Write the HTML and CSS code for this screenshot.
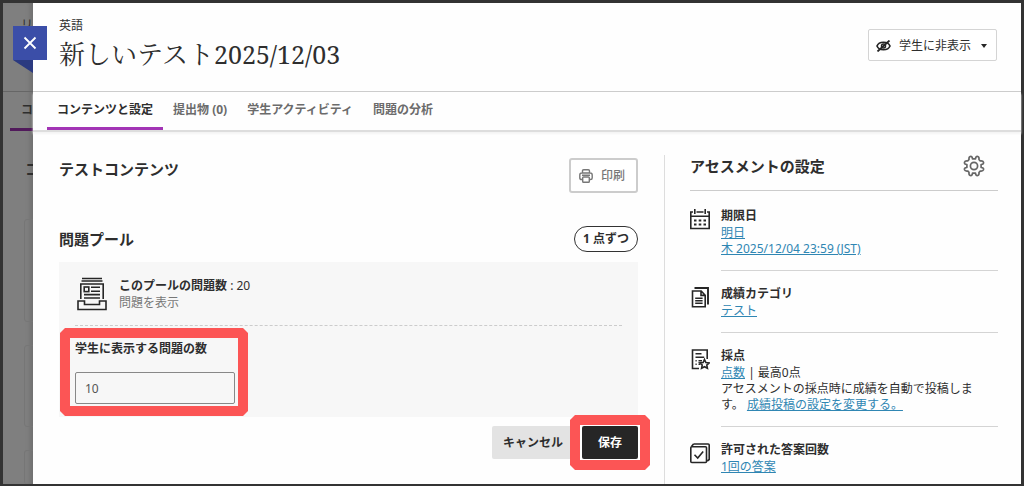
FILE: index.html
```html
<!DOCTYPE html>
<html lang="ja">
<head>
    <meta charset="UTF-8">
    <meta name="viewport" content="width=device-width, initial-scale=1.0">
    <title>新しいテスト2025/12/03</title>
    <link rel="stylesheet" href="styles.css">
</head>
<body>

    <div class="frame">
        <!-- dimmed page behind the panel -->
        <div class="behind" aria-hidden="true">
            <div class="behind-header">リ</div>
            <div class="behind-tabs"><span>コ</span></div>
            <div class="behind-title">コ</div>
            <div class="behind-card tall"></div>
            <div class="behind-card"></div>
            <div class="behind-card"></div>
        </div>

        <div class="panel">
            <button class="close" aria-label="閉じる">
                <svg width="14" height="14" viewBox="0 0 14 14"><path d="M1.500 1.500l11 11M12.500 1.500l-11 11" fill="none" stroke="#fff" stroke-width="1.800"/></svg>
            </button>

            <header class="header">
                <div>
                    <div class="course">英語</div>
                    <h1>新しいテスト<span class="date">2025/12/03</span></h1>
                </div>
                <button class="visibility">
                    <svg width="15" height="12" viewBox="0 0 15 12" fill="none" stroke="#262626"><path d="M1 6c2-5 11-5 13 0c-2 5-11 5-13 0z" stroke-width="1.700"/><circle cx="7.500" cy="6" r="2" stroke-width="1.500"/><path d="M1.500 11.500L13.500 .5" stroke-width="1.800"/></svg>
                    学生に非表示
                    <svg class="caret" width="6" height="4" viewBox="0 0 6 4"><path d="M0 0h6L3 4z" fill="#262626"/></svg>
                </button>
            </header>

            <nav class="tabs">
                <a href="#" class="active">コンテンツと設定</a>
                <a href="#">提出物 (0)</a>
                <a href="#">学生アクティビティ</a>
                <a href="#">問題の分析</a>
            </nav>

            <div class="content">
                <main>
                    <div class="row title-row">
                        <h2>テストコンテンツ</h2>
                        <button class="print">
                            <svg width="14" height="14" viewBox="0 0 14 14" fill="none" stroke="#777" stroke-width="1.400"><path d="M3.500 3.500V2q0-1.200 1.200-1.200h4.600q1.200 0 1.200 1.200v1.500M3.500 10.500H2.500Q.8 10.500.8 9V6q0-2 2-2h8.400q2 0 2 2v3q0 1.500-1.700 1.500h-1M3 6.200h8"/><rect x="3.700" y="8" width="6.600" height="5.200" rx=".8"/></svg>
                            印刷
                        </button>
                    </div>

                    <div class="row pool-row">
                        <h2>問題プール</h2>
                        <span class="badge">1 点ずつ</span>
                    </div>

                    <div class="pool">
                        <div class="pool-head">
                            <svg width="30" height="34" viewBox="0 0 30 34" fill="none" stroke="#262626" stroke-width="1.600"><path d="M5 1.500h20M4.500 4h21M3.800 22V7h22.400v15"/><rect x="7.200" y="10" width="4.600" height="4.600"/><path d="M14 10.200h9M14 14.200h9M7 17.600h16M7 21h16M1 24h6.500v3.500h15V24H29v8.500H1z"/></svg>
                            <div>
                                <div class="pool-count"><strong>このプールの問題数</strong> : 20</div>
                                <div class="pool-show">問題を表示</div>
                            </div>
                        </div>
                        <div class="field marked">
                            <label for="count">学生に表示する問題の数</label>
                            <input type="text" id="count" value="10">
                        </div>
                    </div>

                    <div class="actions">
                        <button class="cancel">キャンセル</button>
                        <div class="marked save-mark"><button class="save">保存</button></div>
                    </div>
                </main>

                <aside>
                    <div class="row side-head">
                        <h2>アセスメントの設定</h2>
                        <button class="gear" aria-label="設定">
                            <svg width="22" height="22" viewBox="0 0 22 22" fill="none" stroke="#666" stroke-width="1.700" stroke-linejoin="round"><path d="M9.500 3.900Q9.300 1 7.200 1.500Q5.700 2 6 4.600Q5.300 5.600 4.600 6Q2 5.700 1.500 7.200Q1 9.300 3.900 9.500V12.500Q1 12.700 1.500 14.800Q2 16.300 4.600 16Q5.600 16.700 6 17.400Q5.700 20 7.200 20.500Q9.300 21 9.500 18.100H12.500Q12.700 21 14.800 20.500Q16.300 20 16 17.400Q16.700 16.400 17.400 16Q20 16.300 20.500 14.800Q21 12.700 18.100 12.500V9.500Q21 9.300 20.500 7.200Q20 5.700 17.400 6Q16.400 5.300 16 4.600Q16.300 2 14.800 1.500Q12.700 1 12.500 3.900Z"/><circle cx="11" cy="11" r="3.600"/></svg>
                        </button>
                    </div>

                    <ul class="settings">
                        <li>
                            <svg width="20" height="21" viewBox="0 0 20 21" fill="none" stroke="#262626" stroke-width="1.600"><path d="M3 3H.8v16.500h18.400V3H17M6.500 3h7M.8 7.200h18.400M4.800 0v5M15.200 0v5"/><path d="M4 11.500h2.500M8.700 11.500h2.600M13.500 11.500H16M4 15.500h2.500M8.700 15.500h2.600M13.500 15.500H16" stroke-width="2"/></svg>
                            <div>
                                <h3>期限日</h3>
                                <p><a href="#">明日</a><br><a href="#">木 2025/12/04 23:59 (JST)</a></p>
                            </div>
                        </li>
                        <li>
                            <svg width="20" height="21" viewBox="0 0 20 21" fill="none" stroke="#262626" stroke-width="1.600"><path d="M4.500 1H18v16.500" stroke-width="1.900"/><path d="M2.500 4h8.700l4 4.200v11.500H2.500zM11 4v4.400h4.200M5.200 11.200h7.400M5.200 13.700h7.400M5.200 16.200h7.400"/></svg>
                            <div>
                                <h3>成績カテゴリ</h3>
                                <p><a href="#">テスト</a></p>
                            </div>
                        </li>
                        <li>
                            <svg width="20" height="21" viewBox="0 0 20 21" fill="none" stroke="#262626" stroke-width="1.600"><path d="M17.200 10V1H2.500v18.500H9M5.500 4.700h6M5.500 8.200h8.700M5.500 11.700h1.200M8.500 11.700H12M5.500 15.200h1.200M8.500 15.200H10"/><path d="M14.500 10.500l1.400 3 3.300.4-2.400 2.200.6 3.200-2.900-1.600-2.900 1.600.6-3.200-2.400-2.200 3.300-.4z"/></svg>
                            <div>
                                <h3>採点</h3>
                                <p><a href="#">点数</a> | 最高0点<br>アセスメントの採点時に成績を自動で投稿します。 <a href="#">成績投稿の設定を変更する。</a></p>
                            </div>
                        </li>
                        <li>
                            <svg width="20" height="21" viewBox="0 0 20 21" fill="none" stroke="#262626" stroke-width="1.600"><rect x=".8" y="3.800" width="15.700" height="15.700" rx="1"/><path d="M3.500 1h14.700q1 0 1 1v14.500l-2 1.500M3.500 1L1.500 3.500M4.500 11.800l3.200 3.200 5.500-6.500"/></svg>
                            <div>
                                <h3>許可された答案回数</h3>
                                <p><a href="#">1回の答案</a></p>
                            </div>
                        </li>
                    </ul>
                </aside>
            </div>
        </div>
    </div>

</body>
</html>
```
FILE: styles.css
```css
* {
    box-sizing: border-box;
}

body {
    margin: 0;
    font-family: "Noto Sans", "Noto Sans CJK JP", sans-serif;
    font-size: 12px;
    line-height: 16px;
    color: #2e2e2e;
}

h1, h2, h3, p, ul {
    margin: 0;
    padding: 0;
}

button, input {
    font: inherit;
    color: inherit;
}

button {
    cursor: pointer;
}

svg {
    display: block;
    flex-shrink: 0;
}

.frame {
    display: flex;
    min-height: 100vh;
    border: 3px solid #333;
    background-color: #fefefe;
}

/* page behind */
.behind {
    width: 30px;
    overflow: hidden;
    background-color: #7f7f7f;
    box-shadow: inset -5px 0 4px -2px #707070;
}

.behind-header {
    height: 89px;
    padding: 14px 0 0 18px;
    border-bottom: 1px solid #666;
}

.behind-tabs {
    height: 39px;
    margin-left: 7px;
    padding: 10px 0 0 11px;
    border-bottom: 3px solid #511a5b;
    font-weight: bold;
}

.behind-title {
    height: 88px;
    padding: 30px 0 0 22px;
    font-size: 15px;
    font-weight: bold;
}

.behind-card {
    width: 60px;
    height: 82px;
    margin: 0 0 23px 21px;
    border: 1px solid #767676;
    border-radius: 3px;
}

.behind-card.tall {
    height: 103px;
}

.behind-card:last-child {
    height: 34px;
    margin-bottom: 0;
    border-bottom: none;
}

/* panel */
.panel {
    position: relative;
    display: flex;
    flex-direction: column;
    flex: 1;
    min-width: 0;
}

.close {
    position: absolute;
    top: 23px;
    left: -20px;
    display: flex;
    align-items: center;
    justify-content: center;
    width: 34px;
    height: 34px;
    padding: 0;
    border: none;
    background-color: #3b4ea8;
}

.close::after {
    content: "";
    position: absolute;
    top: 34px;
    left: 0;
    width: 20px;
    height: 13px;
    background-color: #2b3a80;
    clip-path: polygon(0 0, 100% 0, 100% 100%);
}

.header {
    display: flex;
    justify-content: space-between;
    align-items: flex-start;
    height: 89px;
    padding: 15px 24px 0 26px;
    border-bottom: 1px solid #ccc;
}

h1 {
    margin-top: 2px;
    font-family: "Noto Serif", "Noto Serif CJK JP", "Noto Sans CJK JP", serif;
    font-size: 26px;
    font-weight: normal;
    line-height: 36px;
}

.date {
    font-size: 25px;
}

.visibility {
    display: flex;
    align-items: center;
    gap: 8px;
    height: 32px;
    margin-top: 11px;
    padding: 1px 9px 0 7px;
    border: 1px solid #d4d4d4;
    border-radius: 2px;
    background-color: #fff;
}

.caret {
    margin-left: 2px;
}

.tabs {
    display: flex;
    height: 40px;
    padding-left: 14px;
    border-bottom: 2px solid #ddd;
    box-shadow: 0 2px 2px #f4f4f4;
}

.tabs a {
    padding: 10px 10px 0;
    border-bottom: 3px solid transparent;
    font-weight: bold;
    color: #6b6b6b;
    text-decoration: none;
}

.tabs a.active {
    border-color: #a234b5;
    color: #2e2e2e;
}

.content {
    display: flex;
    flex: 1;
    gap: 26px;
    padding: 23px 23px 0 26px;
}

main {
    flex: 1;
    min-width: 0;
}

.row {
    display: flex;
    justify-content: space-between;
    align-items: center;
}

h2 {
    font-size: 15px;
    line-height: 22px;
}

.title-row {
    align-items: flex-start;
    padding-top: 3px;
}

.print {
    display: flex;
    align-items: center;
    gap: 8px;
    height: 35px;
    padding: 0 11px 0 8px;
    border: 2px solid #ccc;
    border-radius: 3px;
    background-color: #fff;
    font-weight: 500;
    color: #777;
}

.pool-row {
    margin: 33px 0 10px;
}

.badge {
    padding: 4px 8px;
    border: 1px solid #333;
    border-radius: 13px;
    background-color: #fff;
    font-weight: bold;
}

.pool {
    padding: 15px 16px 13px;
    background-color: #f7f7f7;
}

.pool-head {
    display: flex;
    gap: 12px;
    height: 49px;
    padding-left: 2px;
    border-bottom: 1px dashed #ccc;
}

.pool-count {
    line-height: 18px;
}

.pool-show {
    color: #777;
}

/* red highlight frame */
.marked {
    position: relative;
}

.marked::before {
    content: "";
    position: absolute;
    inset: 2px -13px -12px -15px;
    border: 10px solid #fc5555;
    clip-path: polygon(5px 0, calc(100% - 5px) 0, 100% 5px, 100% calc(100% - 5px), calc(100% - 5px) 100%, 5px 100%, 0 calc(100% - 5px), 0 5px);
    pointer-events: none;
}

.save-mark::before {
    inset: -11px -12px;
}

.field {
    width: 160px;
    padding-top: 15px;
}

.field label {
    display: block;
    margin-bottom: 15px;
    font-weight: bold;
    white-space: nowrap;
}

.field input {
    display: block;
    width: 100%;
    height: 32px;
    padding: 0 9px;
    border: 1px solid #888;
    border-radius: 2px;
    background-color: transparent;
    color: #555;
}

.actions {
    display: flex;
    justify-content: flex-end;
    gap: 8px;
    margin-top: 9px;
}

.actions button {
    height: 33px;
    padding: 0 11px;
    border: none;
    border-radius: 2px;
    background-color: #e3e3e3;
    font-weight: bold;
}

.actions .save {
    padding: 0 16px;
    background-color: #262626;
    color: #fff;
}

aside {
    width: 334px;
    padding-left: 25px;
    border-left: 1px solid #ddd;
}

.side-head {
    align-items: flex-start;
    height: 36px;
    padding-right: 13px;
    border-bottom: 1px solid #ccc;
}

.gear {
    padding: 0;
    border: none;
    background: none;
}

.settings {
    margin-top: 2px;
    list-style: none;
}

.settings li {
    display: flex;
    gap: 11px;
}

.settings svg {
    margin-top: 16px;
}

.settings li > div {
    flex: 1;
    padding: 14px 0 13px;
    border-bottom: 1px solid #d4d4d4;
}

.settings li:last-child > div {
    padding-bottom: 0;
    border-bottom: none;
}

h3 {
    font-size: 12px;
    line-height: 18px;
}

.settings p {
    padding-right: 20px;
}

.settings a {
    color: #2f86b3;
}
```
